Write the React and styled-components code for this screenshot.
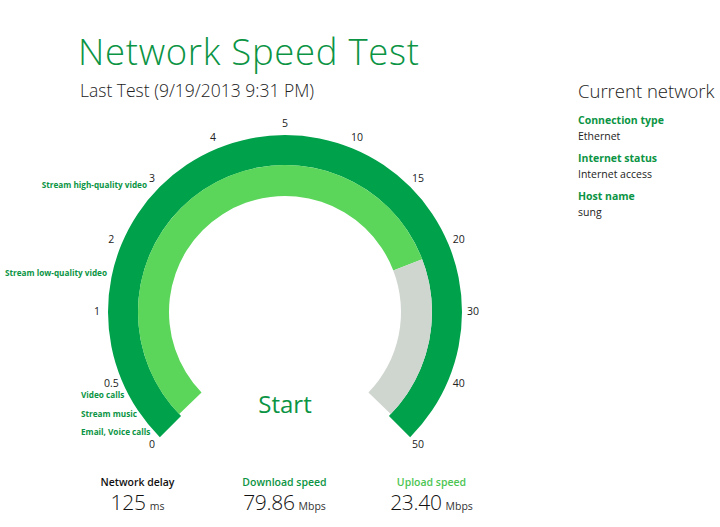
import React from 'react';
import styled, { createGlobalStyle } from 'styled-components';

const GlobalStyle = createGlobalStyle`
  html, body { margin: 0; padding: 0; background: #fff; }
  body { font-family: "Open Sans", "Noto Sans", sans-serif; color: #222; }
`;

const DARK = '#00a14b';
const LIGHT = '#5bd65b';
const GREY = '#cfd5cf';
const TEXT_GREEN = '#0b9444';

const Page = styled.div`
  display: flex;
  width: 720px;
  height: 527px;
  overflow: hidden;
`;

const Main = styled.div`
  width: 560px;
  display: flex;
  flex-direction: column;
`;

const Header = styled.header`
  padding: 27px 0 0 78px;
`;

const Title = styled.h1`
  margin: 0;
  font-size: 36.5px;
  font-weight: 300;
  line-height: 48px;
  color: ${TEXT_GREEN};
  letter-spacing: 0.7px;
`;

const Subtitle = styled.div`
  margin-top: 2px;
  font-size: 17.5px;
  font-weight: 300;
  line-height: 26px;
  color: #222;
  padding-left: 2px;
`;

const GaugeWrap = styled.div`
  position: relative;
  width: 500px;
  height: 340px;
  margin-top: 12px;
`;

const StartButton = styled.button`
  position: absolute;
  left: 235px;
  top: 270px;
  width: 100px;
  height: 36px;
  border: 0;
  background: transparent;
  font-family: inherit;
  font-size: 24px;
  color: ${TEXT_GREEN};
  cursor: pointer;
  padding: 0;
`;

const Stats = styled.div`
  display: grid;
  grid-template-columns: repeat(3, 147px);
  padding-left: 64px;
  margin-top: 19px;
`;

const Stat = styled.div`
  display: flex;
  flex-direction: column;
  align-items: center;
`;

const StatLabel = styled.div`
  font-size: 10.5px;
  font-weight: 600;
  line-height: 16px;
  color: ${(p) => p.$color};
`;

const StatValue = styled.div`
  font-size: 21px;
  font-weight: 300;
  line-height: 24px;
  letter-spacing: -0.3px;
  color: #111;
  white-space: nowrap;
`;

const Unit = styled.span`
  font-size: 10.5px;
  font-weight: 400;
  letter-spacing: 0;
  margin-left: 4px;
  color: #333;
`;

const Side = styled.aside`
  padding: 78px 0 0 18px;
  white-space: nowrap;
`;

const SideTitle = styled.div`
  font-size: 18.5px;
  font-weight: 300;
  line-height: 26px;
  color: #222;
  margin-bottom: 8px;
`;

const FieldLabel = styled.div`
  font-size: 10.5px;
  font-weight: 700;
  line-height: 16px;
  color: ${TEXT_GREEN};
  margin-top: 6px;
`;

const FieldValue = styled.div`
  font-size: 10.5px;
  line-height: 16px;
  color: #222;
`;

const CX = 285;
const CY = 197;

const pt = (r, deg) => {
  const a = (deg * Math.PI) / 180;
  return [CX + r * Math.sin(a), CY - r * Math.cos(a)];
};

const band = (rOut, rIn, a0, a1) => {
  const [x0, y0] = pt(rOut, a0);
  const [x1, y1] = pt(rOut, a1);
  const [x2, y2] = pt(rIn, a1);
  const [x3, y3] = pt(rIn, a0);
  const large = a1 - a0 > 180 ? 1 : 0;
  return `M${x0} ${y0} A${rOut} ${rOut} 0 ${large} 1 ${x1} ${y1} L${x2} ${y2} A${rIn} ${rIn} 0 ${large} 0 ${x3} ${y3} Z`;
};

const ticks = ['0', '0.5', '1', '2', '3', '4', '5', '10', '15', '20', '30', '40', '50'];

const captions = [
  { text: 'Stream high-quality video', x: 147, y: 70, anchor: 'end' },
  { text: 'Stream low-quality video', x: 107, y: 158, anchor: 'end' },
  { text: 'Video calls', x: 81, y: 280, anchor: 'start' },
  { text: 'Stream music', x: 81, y: 299, anchor: 'start' },
  { text: 'Email, Voice calls', x: 81, y: 317, anchor: 'start' },
];

function Gauge() {
  return (
    <svg width="500" height="340" viewBox="0 0 500 340">
      <path d={band(177, 147, -135, 135)} fill={DARK} />
      <path d={band(147, 116, -134, 69)} fill={LIGHT} />
      <path d={band(147, 116, 69, 134)} fill={GREY} />
      {ticks.map((t, i) => {
        const [x, y] = pt(188, -135 + i * 22.5);
        return (
          <text key={t} x={x} y={y + 3} textAnchor="middle" fontSize="10.5" fill="#222" fontFamily="Open Sans, sans-serif">
            {t}
          </text>
        );
      })}
      {captions.map((c) => (
        <text key={c.text} x={c.x} y={c.y + 3} textAnchor={c.anchor} fontSize="8.2" fontWeight="700" fill={TEXT_GREEN} fontFamily="Open Sans, sans-serif">
          {c.text}
        </text>
      ))}
    </svg>
  );
}

export default function App() {
  return (
    <Page>
      <GlobalStyle />
      <Main>
        <Header>
          <Title>Network Speed Test</Title>
          <Subtitle>Last Test (9/19/2013 9:31 PM)</Subtitle>
        </Header>
        <GaugeWrap>
          <Gauge />
          <StartButton>Start</StartButton>
        </GaugeWrap>
        <Stats>
          <Stat>
            <StatLabel $color="#111">Network delay</StatLabel>
            <StatValue>125<Unit>ms</Unit></StatValue>
          </Stat>
          <Stat>
            <StatLabel $color={TEXT_GREEN}>Download speed</StatLabel>
            <StatValue>79.86<Unit>Mbps</Unit></StatValue>
          </Stat>
          <Stat>
            <StatLabel $color="#4cc552">Upload speed</StatLabel>
            <StatValue>23.40<Unit>Mbps</Unit></StatValue>
          </Stat>
        </Stats>
      </Main>
      <Side>
        <SideTitle>Current network</SideTitle>
        <FieldLabel>Connection type</FieldLabel>
        <FieldValue>Ethernet</FieldValue>
        <FieldLabel>Internet status</FieldLabel>
        <FieldValue>Internet access</FieldValue>
        <FieldLabel>Host name</FieldLabel>
        <FieldValue>sung</FieldValue>
      </Side>
    </Page>
  );
}
